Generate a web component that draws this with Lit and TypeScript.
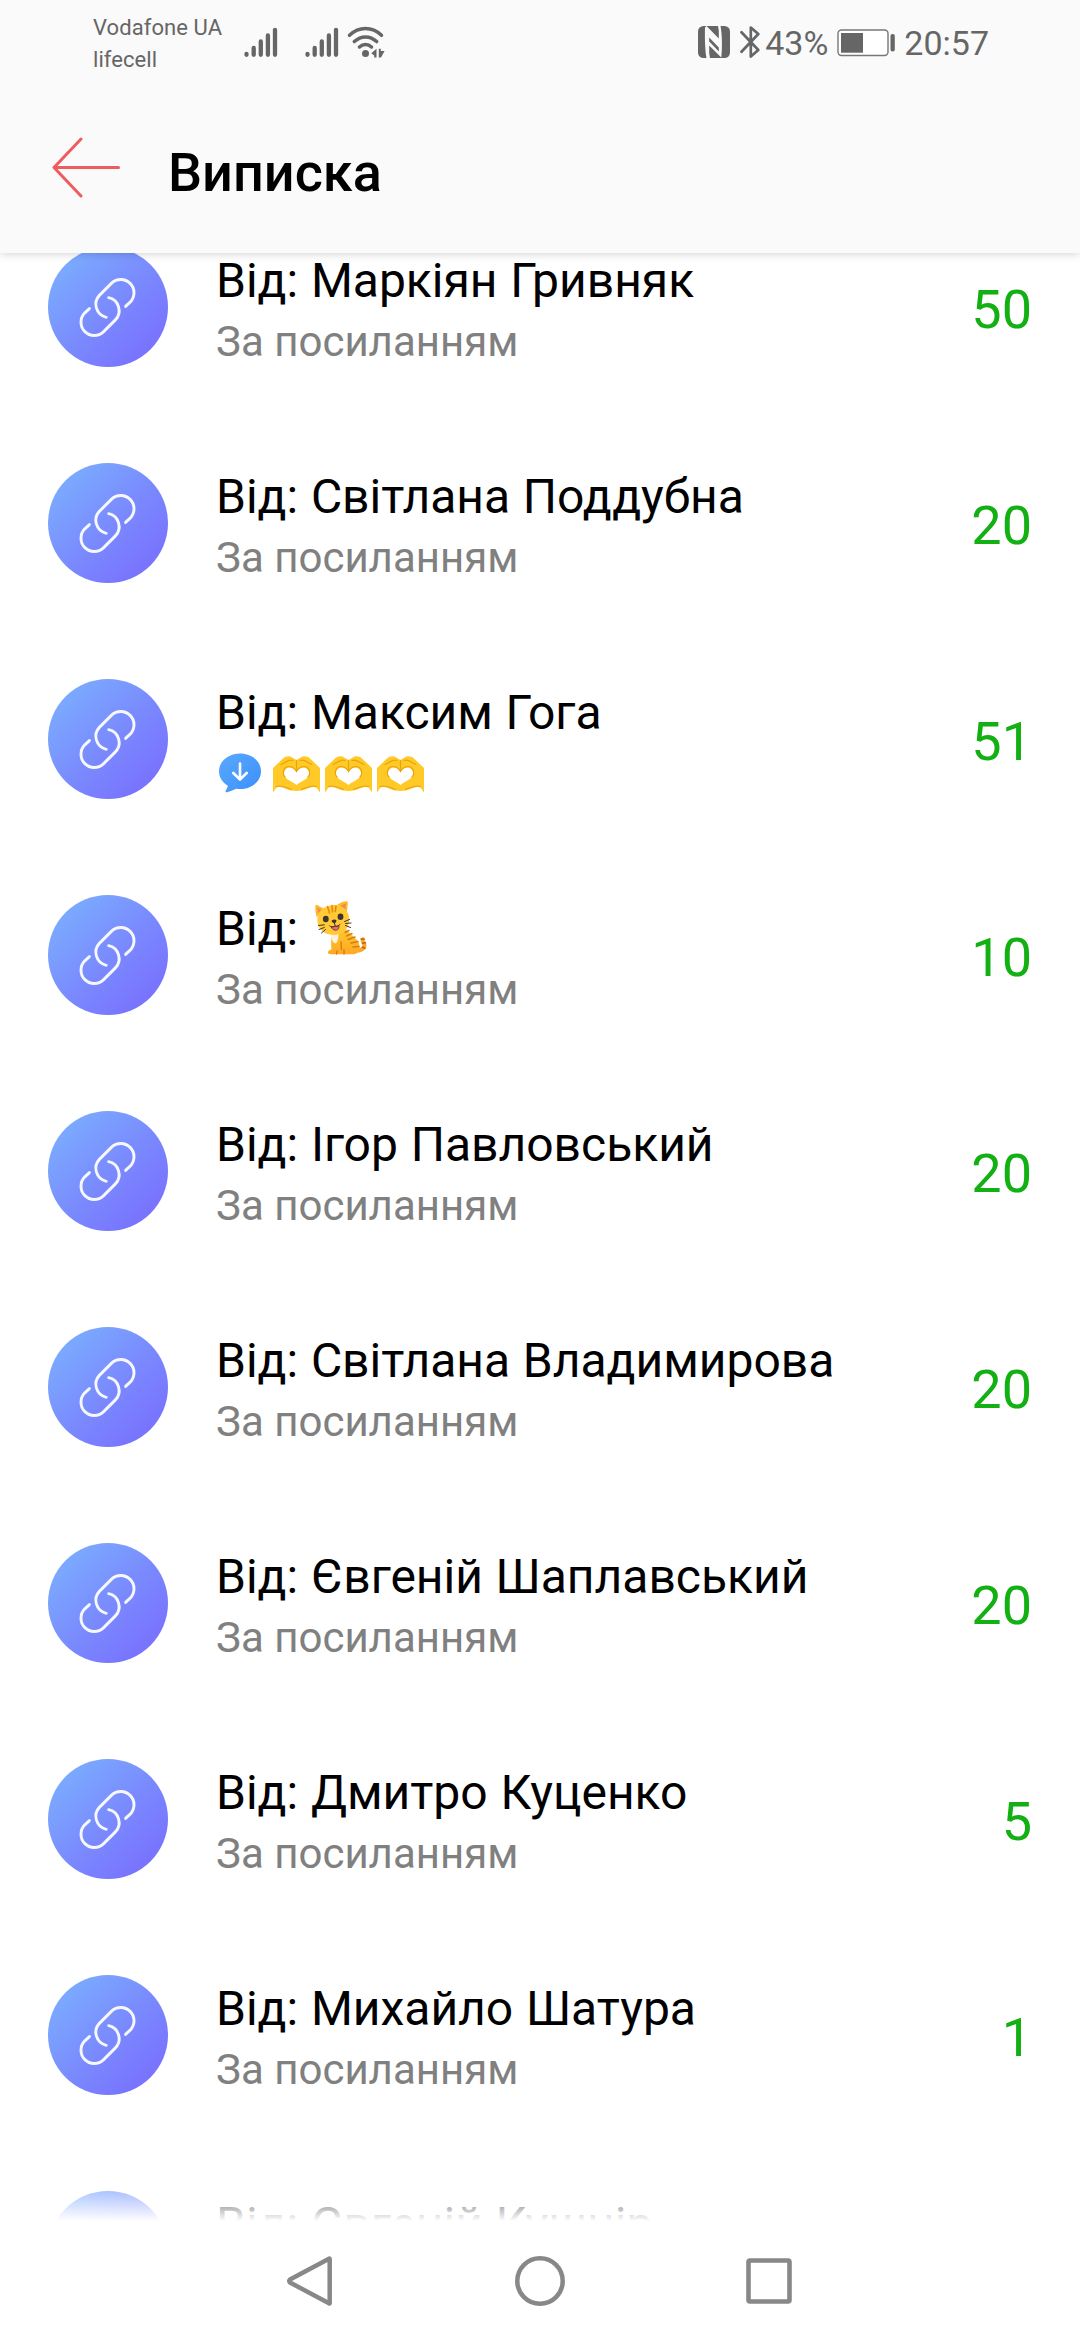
import { LitElement, html, css, nothing } from "lit";
import { customElement, property } from "lit/decorators.js";

type Entry = { name: string; amount: string; cat?: boolean; hearts?: boolean };

const ENTRIES: Entry[] = [
  { name: "Маркіян Гривняк", amount: "50" },
  { name: "Світлана Поддубна", amount: "20" },
  { name: "Максим Гога", amount: "51", hearts: true },
  { name: "", amount: "10", cat: true },
  { name: "Ігор Павловський", amount: "20" },
  { name: "Світлана Владимирова", amount: "20" },
  { name: "Євгеній Шаплавський", amount: "20" },
  { name: "Дмитро Куценко", amount: "5" },
  { name: "Михайло Шатура", amount: "1" },
  { name: "Євгеній Кушнір", amount: "" },
];

const linkIcon = html`<svg class="link" viewBox="0 0 120 120" width="120" height="120">
  <g fill="none" stroke="#fff" stroke-opacity=".93" stroke-width="2.9" stroke-linecap="round">
    <path d="M77.6 59.4 82.4 54.9A13.3 13.3 0 0 0 63.6 36.1L51.6 48.1A13.3 13.3 0 0 0 58.3 70.3" />
    <path d="M41.4 61.6 36.6 66.1A13.3 13.3 0 0 0 55.4 84.9L67.4 72.9A13.3 13.3 0 0 0 60.7 50.7" />
  </g>
</svg>`;

const bubble = html`<svg class="bubble" viewBox="0 0 42 40" width="42" height="40">
  <defs>
    <linearGradient id="b" x1="0" y1="0" x2="1" y2="1">
      <stop offset="0" stop-color="#5aa9ff" /><stop offset="1" stop-color="#3b8ffb" />
    </linearGradient>
  </defs>
  <path fill="url(#b)" d="M21 .5C9.3.5 0 8.3 0 18.3c0 6 3.2 10.9 8.2 13.9.6.4.7 1 .5 1.6L6.6 38c-.5 1 .3 1.600 1.300 1.300 3.300-.8 6.400-2 9.100-3.500 1.300.2 2.600.3 4 .3 11.700 0 21-7.800 21-17.800S32.700.5 21 .5z" />
  <path fill="none" stroke="#fff" stroke-width="2.600" stroke-linecap="round" stroke-linejoin="round" d="M21 10.500V26M14.300 20 21 26.500 27.700 20" />
</svg>`;

const hearts = html`<svg class="hands" viewBox="0 0 47 38" width="47" height="38">
  <path fill="#ffca28" fill-rule="evenodd" d="M0 13 10 3.500C12 1.500 15 .8 17.500 1.500L23.500 5 29.500 1.500C32 .8 35 1.500 37 3.500L47 13V37.500L43.500 32.500C38 30.500 34 34.500 28.500 35.500 25.500 36 21.500 36 18.500 35.500 13 34.500 9 30.500 3.500 32.500L0 37.500ZM23.500 16.500C20.500 11 11 11.500 10.800 18.500 10.600 24 17.500 25 23.500 30 29.500 25 36.400 24 36.200 18.500 36 11.500 26.500 11 23.500 16.500Z" />
  <g fill="none" stroke="#e9a30c" stroke-width="1.200" stroke-linecap="round">
    <path d="M23.500 5.500V15.500M8 9.500C12 8 16 3.500 20 5.500M39 9.500C35 8 31 3.500 27 5.500" />
    <path d="M12 22C8.500 18 11 11.500 16 11.500 19 11.500 21.500 13 23.500 16.500 25.500 13 28 11.500 31 11.500 36 11.500 38.500 18 35 22" />
    <path d="M3.500 31.500C9 29.500 13 33 18.500 34.500M43.500 31.500C38 29.500 34 33 28.500 34.500" />
  </g>
</svg>`;

const cat = html`<svg class="cat" viewBox="0 0 52 54" width="52" height="54">
  <defs>
    <linearGradient id="f" x1="0" y1="0" x2="0" y2="1">
      <stop offset="0" stop-color="#ffca28" /><stop offset="1" stop-color="#ffa726" />
    </linearGradient>
  </defs>
  <path fill="none" stroke="#fca72a" stroke-width="4" stroke-linecap="round" d="M42 49.500C48 49.500 50.500 45.500 49 42.500 47.800 40.500 47 40 48 38.300" />
  <path fill="none" stroke="#bf6510" stroke-width="1.500" d="M45.500 38 49.500 38.300M47 42.500 51 41.500M47 46 50.500 47.500" />
  <path fill="url(#f)" d="M16 31C17 36 15.500 43 16.500 48.500 14 49 12.800 50.300 13 51.800 13.300 53.200 15 53.300 17 53.300H38C43 53.300 45.500 49 44.500 44.500 43.500 39 39 36 35 32.500L30 27Z" />
  <path fill="#fff3e0" d="M15.500 32.500C19 34.500 23 34 23.500 32 23.500 38 22.500 42 20 42.500 17.500 41 16 37 15.500 32.500Z" />
  <path fill="none" stroke="#d37d18" stroke-width="1.400" stroke-linecap="round" d="M30 31.500 34 29.500M31.500 35 37 32.500M33 38.500 40 36M36 42 43 40.500M38 46 44 45.500M26 41 26.500 48.500M21.500 53 22 50M29 53 29 49" />
  <path fill="#ffb82b" d="M1.500 16C.5 11 0 7 .5 4.500 1 3.200 2 3.500 3 4.500L9.500 8ZM22 4C25 2 29 .3 31.500.3 33 .5 33 1.800 32.800 3L31.500 14Z" />
  <path fill="#f48a50" d="M3 12 2.500 6.500 6.800 9.300ZM25.500 4.800 31 2.300 30.300 9Z" />
  <path fill="#ffca35" d="M15 4.500C24 2.300 32 6.500 33.800 15 35.500 24 31 31.500 22.500 33.200 13 35 5.500 31.500 3 23.500 .5 15 5 7 15 4.500Z" />
  <path fill="none" stroke="#e58a14" stroke-width="1.600" stroke-linecap="round" d="M12.500 5.500 14.500 12M17 4.600 17.500 11M21 5 20.300 10.500" />
  <ellipse cx="10.800" cy="18" rx="2.900" ry="3.300" fill="#40322f" /><ellipse cx="25.500" cy="15.800" rx="2.900" ry="3.300" fill="#40322f" />
  <path fill="#40322f" d="M16.500 20C17.500 18.500 20.500 18 21.500 19.500 21.300 21 20.500 22 19.500 22.300 18 22.200 17 21.300 16.500 20Z" />
  <path fill="#ee6b67" stroke="#5b2b20" stroke-width=".7" d="M16 25.500C18.500 26 22 25.500 24 24.300 24.500 27.500 23 29 21 29.200 18.500 29.500 17 28 16 25.500Z" />
  <path fill="none" stroke="#40322f" stroke-width="1" stroke-linecap="round" d="M19.500 22.300 20 24.500C18.500 26.500 15.500 26.500 14.500 24.800M20 24.500C21.500 26 24 25.500 24.800 23.300M3.500 24.500 9.300 23.800M4 28.500 9.300 26.500M6.500 32 10.500 28.500M29.500 20.500 34.500 18.500M30.500 22.500 36 22M30.500 24.500 35.500 26.500" />
</svg>`;

const bars = html`<svg class="bars" viewBox="0 0 34 32" width="34" height="32">
  <g stroke="#666" stroke-width="4.300" stroke-linecap="round">
    <path d="M2.500 28V28.800M9.700 22V28.800M16.800 15.500V28.800M23.900 9.500V28.800M31 3.800V28.800" />
  </g>
</svg>`;

const wifi = html`<svg class="wifi" viewBox="0 0 38 32" width="38" height="32">
  <g fill="none" stroke="#666" stroke-width="3.500" stroke-linecap="round">
    <path d="M2.500 9.300C12 .3 25 .3 34.500 9.300M7.300 15.600C14 9.300 23 9.300 29.700 15.600M12.500 21C16 17.800 21 17.800 24.500 21" />
  </g>
  <circle cx="18.500" cy="27.500" r="3.500" fill="#666" />
  <path fill="#666" d="M24.300 27.300 29.500 22.800V31.500H27.200V29.400ZM31.800 22.800H33.800V25H37.600L34 31.500H31.800Z" />
</svg>`;

const nfc = html`<svg class="nfc" viewBox="0 0 32 32" width="32" height="32">
  <rect width="32" height="32" rx="5.500" fill="#666" />
  <path fill="#fafafa" d="M7 1.500 8.500 0 20.800 12.500V4.500L20 0H22.500C24.300 9 24.300 23 23.300 31.500L11.200 19.500V27L12 32H8.500C6.800 23 6.800 9 7 1.500Z" />
  <path fill="#666" d="M9 3.500 21.800 16.500V22L10.200 10V14.500L22.500 27.500 22 29.500 9.500 16.500Z" opacity=".0" />
  <path fill="#666" d="M11.200 11.500 20.800 21.500V25.500L11.200 15.500Z" />
</svg>`;

const bluetooth = html`<svg class="bt" viewBox="0 0 20 32" width="20" height="32">
  <path fill="none" stroke="#666" stroke-width="2.700" stroke-linejoin="round" stroke-linecap="round" d="M1.500 6.300 18.300 24 10.800 30.500V1.500L18.300 8 1.500 25.700" />
</svg>`;

const battery = html`<svg class="battery" viewBox="0 0 59 28" width="59" height="28">
  <rect x="1" y="1" width="50" height="25.500" rx="3.500" fill="#fff" stroke="#777" stroke-width="1.400" />
  <rect x="4" y="4" width="22" height="19.700" fill="#666" />
  <rect x="53.500" y="5" width="4.300" height="17.500" rx="2" fill="#666" />
</svg>`;

@customElement("statement-row")
export class StatementRow extends LitElement {
  @property({ attribute: false }) entry!: Entry;

  static styles = css`
    :host { display: flex; height: 120px; flex: none; padding: 0 48px; }
    .avatar {
      width: 120px; height: 120px; border-radius: 50%; flex: none;
      background: linear-gradient(135deg, #7bb0ff 7%, #7a8afe 52%, #786cfe 95%);
    }
    .link, .bubble, .hands, .cat { display: block; flex: none; }
    .body { flex: 1; display: flex; flex-direction: column; gap: 8px; padding: 6px 0 0 48px; }
    .name { display: flex; height: 56px; font-size: 48px; line-height: 56px; color: #000; white-space: pre; word-spacing: 0.8px; }
    .note { display: flex; height: 49px; font-size: 42px; line-height: 49px; color: #808080; white-space: pre; }
    .bubble { margin: 4px 12px 0 3px; }
    .hands { margin: 6px 5px 0 0; }
    .cat { margin: 0 0 0 4px; }
    .amount { padding-top: 31px; font-size: 54px; line-height: 63px; color: #12b012; }
  `;

  render() {
    const e = this.entry;
    return html`
      <div class="avatar">${linkIcon}</div>
      <div class="body">
        <div class="name">${"Від: " + e.name}${e.cat ? cat : nothing}</div>
        <div class="note">${e.hearts ? html`${bubble}${hearts}${hearts}${hearts}` : "За посиланням"}</div>
      </div>
      <div class="amount">${e.amount}</div>
    `;
  }
}

@customElement("app-root")
export class AppRoot extends LitElement {
  static styles = css`
    :host {
      display: flex; flex-direction: column; width: 1080px; height: 2340px;
      overflow: hidden; background: #fff; font-family: Roboto, sans-serif;
    }
    svg { display: block; flex: none; }
    .top { flex: none; height: 253px; background: #fafafa; position: relative; z-index: 1; box-shadow: 0 1px 8px rgba(0, 0, 0, 0.18); }
    .status { display: flex; height: 86px; padding: 0 91px 0 93px; color: #666; }
    .carriers { width: 151px; padding-top: 12px; font-size: 22px; line-height: 32px; letter-spacing: 0.07px; white-space: nowrap; }
    .bars { margin: 26px 27px 0 0; }
    .wifi { margin: 26px 0 0 -19px; }
    .spacer { flex: 1; }
    .nfc { margin: 26px 10px 0 0; }
    .bt { margin: 26px 5px 0 0; }
    .pct, .clock { font-size: 34px; line-height: 40px; padding-top: 23px; }
    .battery { margin: 29px 8px 0 9px; }
    .bar { display: flex; height: 167px; padding-left: 51px; }
    .arrow { margin-top: 51px; }
    .title { margin: 0 0 0 47px; padding-top: 55px; font-size: 54px; line-height: 63px; font-weight: 500; color: #000; }
    .list { flex: 1; min-height: 0; overflow: hidden; position: relative; }
    .rows { display: flex; flex-direction: column; gap: 96px; margin-top: -6px; }
    .fade { position: absolute; left: 0; right: 0; bottom: 0; height: 48px; background: linear-gradient(rgba(255, 255, 255, 0), #fff); }
    .nav { flex: none; height: 119px; display: flex; justify-content: center; gap: 180px; align-items: center; }
  `;

  render() {
    return html`
      <header class="top">
        <div class="status">
          <div class="carriers"><div>Vodafone UA</div><div>lifecell</div></div>
          ${bars}${bars}${wifi}
          <div class="spacer"></div>
          ${nfc}${bluetooth}
          <div class="pct">43%</div>
          ${battery}
          <div class="clock">20:57</div>
        </div>
        <div class="bar">
          <svg class="arrow" viewBox="0 0 70 62" width="70" height="62">
            <path fill="none" stroke="#ee5c60" stroke-width="3" stroke-linecap="round" stroke-linejoin="round" d="M67.500 30.500H3M30 2 3 30.500 30 59" />
          </svg>
          <h1 class="title">Виписка</h1>
        </div>
      </header>
      <main class="list">
        <div class="rows">${ENTRIES.map((e) => html`<statement-row .entry=${e}></statement-row>`)}</div>
        <div class="fade"></div>
      </main>
      <nav class="nav">
        <svg viewBox="0 0 50 50" width="50" height="50">
          <path fill="none" stroke="#888" stroke-width="4.500" stroke-linejoin="round" d="M43.700 3V47.200Q43.700 47.800 43 47.300L4 26.500Q2.600 25 4 23.500L43 2.700Q43.700 2.200 43.700 3Z" transform="translate(1 0)" />
        </svg>
        <svg viewBox="0 0 50 50" width="50" height="50"><circle cx="25" cy="25" r="22.700" fill="none" stroke="#888" stroke-width="4.500" /></svg>
        <svg viewBox="0 0 50 50" width="50" height="50"><rect x="3.500" y="4.500" width="41" height="41" rx="1.500" fill="none" stroke="#888" stroke-width="4.600" /></svg>
      </nav>
    `;
  }
}
